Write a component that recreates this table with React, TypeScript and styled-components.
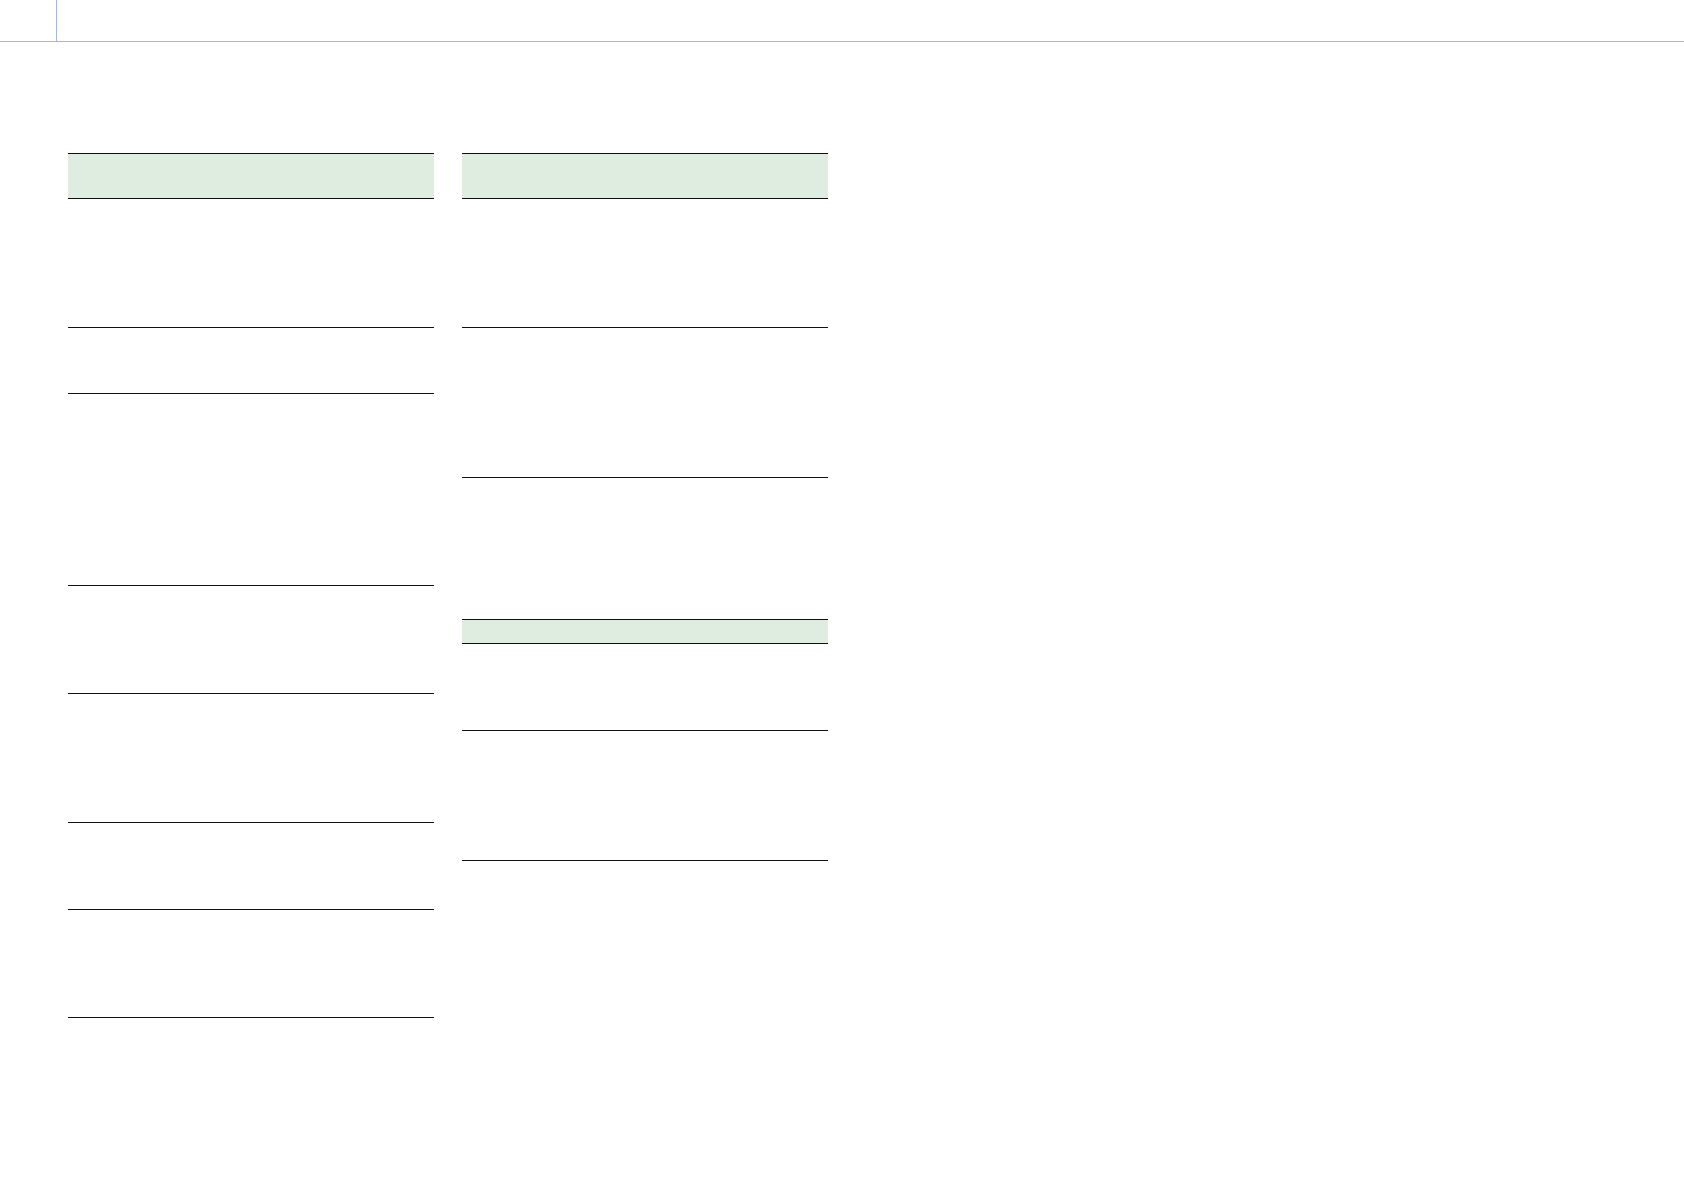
import styled, { createGlobalStyle } from 'styled-components';

const GlobalStyle = createGlobalStyle`
  html, body {
    margin: 0;
    padding: 0;
    background: #ffffff;
    font-family: "Liberation Sans", Arial, sans-serif;
  }
`;

const Page = styled.div`
  width: 1684px;
  min-height: 1191px;
  background: #ffffff;
`;

const TopBar = styled.header`
  height: 42px;
  box-sizing: border-box;
  border-bottom: 1px solid #a2b5e4;
  display: flex;
`;

const TopBarTab = styled.div`
  width: 57px;
  box-sizing: border-box;
  border-right: 1px solid #a2b5e4;
`;

const Content = styled.main`
  display: flex;
  align-items: flex-start;
  gap: 28px;
  padding: 111px 0 0 68px;
`;

const Column = styled.section`
  width: 366px;
  display: flex;
  flex-direction: column;
`;

const Table = styled.div<{ $offset?: number }>`
  width: 100%;
  margin-top: ${(p) => p.$offset ?? 0}px;
  border-top: 1px solid #111;
`;

const HeadRow = styled.div<{ $h: number }>`
  height: ${(p) => p.$h - 1}px;
  box-sizing: border-box;
  background: #dfede0;
  border-bottom: 1px solid #111;
`;

const Row = styled.div<{ $h: number }>`
  height: ${(p) => p.$h}px;
  box-sizing: border-box;
  border-bottom: 1px solid #111;
`;

const leftRows = [129, 66, 192, 108, 129, 87, 108];
const rightRows = [129, 150];
const rightSecondRows = [87, 130];

const App = () => {
  return (
    <Page>
      <GlobalStyle />
      <TopBar>
        <TopBarTab />
      </TopBar>
      <Content>
        <Column>
          <Table>
            <HeadRow $h={46} />
            {leftRows.map((h, i) => (
              <Row key={i} $h={h} />
            ))}
          </Table>
        </Column>
        <Column>
          <Table>
            <HeadRow $h={46} />
            {rightRows.map((h, i) => (
              <Row key={i} $h={h} />
            ))}
          </Table>
          <Table $offset={141}>
            <HeadRow $h={25} />
            {rightSecondRows.map((h, i) => (
              <Row key={i} $h={h} />
            ))}
          </Table>
        </Column>
      </Content>
    </Page>
  );
};

export default App;
